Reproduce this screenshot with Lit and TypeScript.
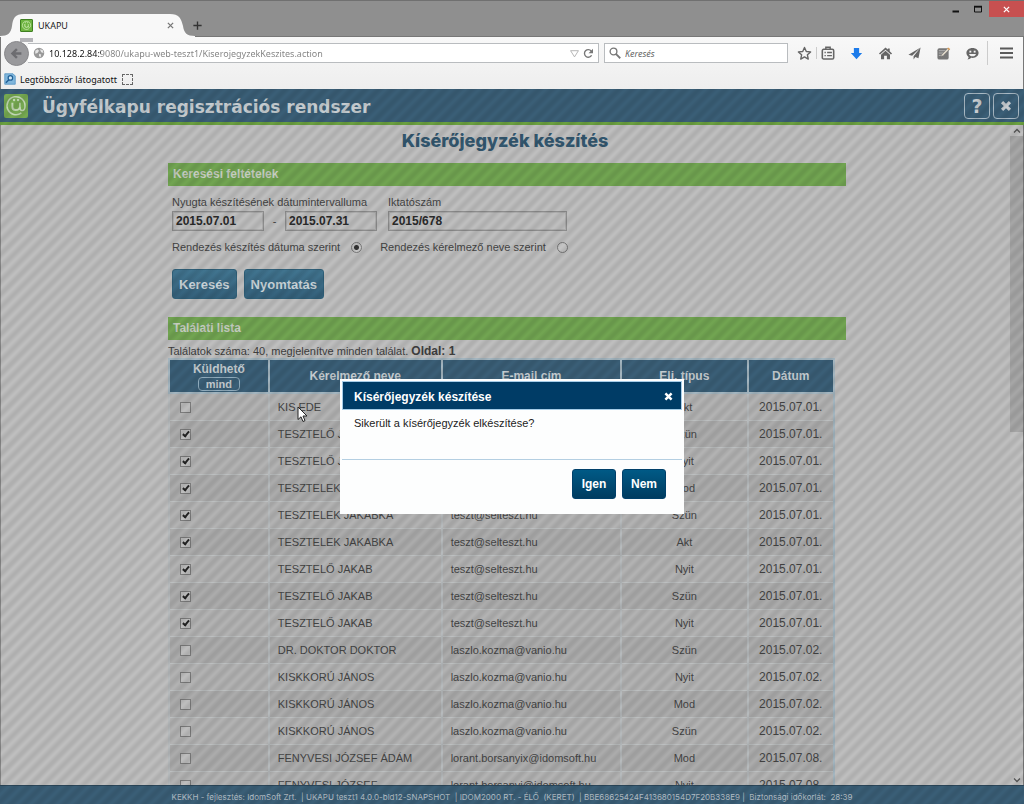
import { LitElement, html, css, svg } from "lit";
import { customElement, state } from "lit/decorators.js";

interface Hit {
  on: boolean;
  name: string;
  mail: string;
  kind: string;
  date: string;
}

const hit = (on: boolean, name: string, mail: string, kind: string, date: string): Hit => ({ on, name, mail, kind, date });

const HITS: Hit[] = [
  hit(false, "KIS EDE", "teszt@selteszt.hu", "Akt", "2015.07.01."),
  hit(true, "TESZTELŐ JAKAB", "teszt@selteszt.hu", "Szün", "2015.07.01."),
  hit(true, "TESZTELŐ JAKAB", "teszt@selteszt.hu", "Nyit", "2015.07.01."),
  hit(true, "TESZTELEK JAKABKA", "teszt@selteszt.hu", "Mod", "2015.07.01."),
  hit(true, "TESZTELEK JAKABKA", "teszt@selteszt.hu", "Szün", "2015.07.01."),
  hit(true, "TESZTELEK JAKABKA", "teszt@selteszt.hu", "Akt", "2015.07.01."),
  hit(true, "TESZTELŐ JAKAB", "teszt@selteszt.hu", "Nyit", "2015.07.01."),
  hit(true, "TESZTELŐ JAKAB", "teszt@selteszt.hu", "Szün", "2015.07.01."),
  hit(true, "TESZTELŐ JAKAB", "teszt@selteszt.hu", "Nyit", "2015.07.01."),
  hit(false, "DR. DOKTOR DOKTOR", "laszlo.kozma@vanio.hu", "Szün", "2015.07.02."),
  hit(false, "KISKKORÚ JÁNOS", "laszlo.kozma@vanio.hu", "Nyit", "2015.07.02."),
  hit(false, "KISKKORÚ JÁNOS", "laszlo.kozma@vanio.hu", "Mod", "2015.07.02."),
  hit(false, "KISKKORÚ JÁNOS", "laszlo.kozma@vanio.hu", "Szün", "2015.07.02."),
  hit(false, "FENYVESI JÓZSEF ÁDÁM", "lorant.borsanyix@idomsoft.hu", "Mod", "2015.07.08."),
  hit(false, "FENYVESI JÓZSEF", "lorant.borsanyi@idomsoft.hu", "Nyit", "2015.07.08."),
];

const icon = (size: number, body: unknown, cls = "") =>
  html`<svg class="ico ${cls}" width=${size} height=${size} viewBox="0 0 16 16" aria-hidden="true">${body}</svg>`;

const atSign = svg`
  <path d="M11.6 12.6a6 6 0 1 1 2.4-4.6c0 2-.8 3-1.9 3s-1.5-.9-1.5-2V5.9" fill="none" stroke="currentColor" stroke-width="1"/>
  <path d="M5.6 5.9v2.8c0 1.3.8 2 2.1 2s2.7-.7 2.9-2" fill="none" stroke="currentColor" stroke-width="1.3"/>
  <circle cx="6.7" cy="4" r=".8" fill="currentColor"/><circle cx="9.4" cy="4" r=".8" fill="currentColor"/>`;

const star = svg`<path d="M8 1.6l1.9 4.2 4.6.5-3.4 3.1.9 4.5L8 11.6l-4 2.3.9-4.5L1.5 6.3l4.6-.5z" fill="none" stroke="#666" stroke-width="1.5" stroke-linejoin="round"/>`;
const clipboard = svg`<rect x="1.500" y="3.800" width="13" height="11" rx="1.500" fill="none" stroke="#666" stroke-width="1.800"/><path d="M5.500 4V1.500h5v2.500M4 7.500h1.500M7 7.500h5.500M4 11h1.500M7 11h5.500" fill="none" stroke="#666" stroke-width="1.600"/>`;
const download = svg`<path d="M5.200 2h5.600v5.500H14L8 14 2 7.500h3.200z" fill="#1c7bea"/>`;
const home = svg`<path d="M8 1.500l2.500 2.300V2.600h2v3L15 8l-1.200 1L8 3.900 2.200 9 1 8z" fill="#666"/><path d="M3.200 9.300L8 5l4.800 4.300V14H9.500v-3.500h-3V14H3.200z" fill="#666"/>`;
const plane = svg`<path d="M14.500 1.500L1.500 9.300l4 1.200zM14.500 1.500L7 11v3.300l1.900-2.500 3.300 1.200z" fill="#666"/>`;
const note = svg`<rect x="1.500" y="2.500" width="12" height="12" rx="2" fill="#777"/><path d="M3 5h8M3 7.500h7M3 10h5" stroke="#b5b5b5"/><path d="M5 11.500l1-2.500 6.500-6.700 1.800 1.400L7.500 10.500z" fill="#e0d8ca" stroke="#666" stroke-width=".5"/><path d="M12 2.800l1-1.300 2.200 1.700-1.100 1.200z" fill="#d79a55"/>`;
const smile = svg`<path d="M8 2c3.900 0 6.500 2.300 6.500 5.300 0 3.100-2.600 5.400-6.500 5.400-.5 0-1 0-1.500-.1-1 1-2.500 1.700-4 1.700.8-.7 1.300-1.700 1.300-2.700C2.300 10.600 1.500 9.100 1.500 7.300 1.500 4.300 4.100 2 8 2z" fill="#666"/><rect x="4.700" y="5" width="2" height="2" fill="#f2f2f2"/><rect x="9.300" y="5" width="2" height="2" fill="#f2f2f2"/><path d="M4.300 8.500h7.400c-.4 1.700-1.800 2.500-3.700 2.500s-3.300-.8-3.700-2.500z" fill="#f2f2f2"/>`;
const burger = svg`<path d="M2 3.500h13M2 8h13M2 12.500h13" stroke="#5a5a5a" stroke-width="2"/>`;
const cross = svg`<path d="M3.500 3.500l9 9M12.500 3.500l-9 9" stroke="currentColor" stroke-width="3.600"/>`;
const thinCross = svg`<path d="M2 2l12 12M14 2L2 14" stroke="currentColor" stroke-width="3"/>`;

@customElement("browser-chrome")
class BrowserChrome extends LitElement {
  static styles = css`
    :host {
      display: block;
      font-family: "Noto Sans", "Open Sans", sans-serif;
      font-size: 9px;
      color: #222;
    }
    button { border: 0; padding: 0; margin: 0; background: none; font: inherit; color: inherit; display: flex; align-items: center; justify-content: center; }
    .ico { display: block; flex: none; }
    .strip {
      height: 36px;
      display: flex;
      align-items: flex-end;
      background: #8f8f8f;
      border-top: 1px solid #707070;
      box-sizing: border-box;
    }
    .tab { position: relative; width: 190px; height: 22px; display: flex; align-items: center; padding: 0 15px 0 20px; box-sizing: border-box; gap: 5px; }
    .shape { position: absolute; left: 0; bottom: -1px; }
    .tab > .fav, .tab > span, .tab > button { position: relative; }
    .fav { width: 13px; height: 13px; background: #6db33f; color: #d9f0c0; border: 1px solid #3f7f22; box-sizing: border-box; border-radius: 1px; }
    .tab span { flex: 1; }
    .tab button { width: 10px; color: #777; }
    .plus { width: 14px; height: 22px; color: #333; }
    .controls { margin-left: auto; align-self: flex-start; display: flex; }
    .controls button { width: 22px; height: 16px; }
    .controls .quit { width: 35px; background: #c75050; color: #fff; }
    .bars { background: linear-gradient(#f8f8f8, #eeeeee); border: 1px solid #777; border-bottom: 0; }
    .nav { position: relative; display: flex; align-items: center; height: 32px; padding: 0 9px 0 27px; }
    .ghost { position: absolute; left: 19px; top: 1px; width: 13px; height: 4px; background: #b4b4b8; }
    .back { position: absolute; left: 3px; top: 4px; width: 25px; height: 25px; border-radius: 50%; background: #99999c; color: #6c6c70; border: 1px solid #88888b; box-sizing: border-box; }
    .url, .find { height: 20px; box-sizing: border-box; background: #fff; border: 1px solid #b9bcbf; display: flex; align-items: center; }
    .url { flex: 1; border-left: 0; padding: 0 4px 0 5px; gap: 4px; margin-right: 5px; }
    .find { width: 184px; padding: 0 4px; gap: 4px; }
    input { border: 0; padding: 0; outline: 0; flex: 1; min-width: 0; background: none; font: inherit; color: #777; }
    .url input {
      background: linear-gradient(90deg, #111 0 52px, #808080 52px);
      -webkit-background-clip: text;
      background-clip: text;
      -webkit-text-fill-color: transparent;
    }
    .find input::placeholder { color: #666; font-style: italic; opacity: 1; }
    .tools { display: flex; align-items: center; margin-left: 9px; gap: 14px; }
    .pair { display: flex; align-items: center; gap: 4px; }
    .sep { width: 1px; height: 12px; background: #ccc; }
    .tall { height: 24px; margin: 0 -4px 0 -7px; }
    .marks { display: flex; align-items: center; height: 20px; padding-left: 3px; gap: 5px; color: #111; }
    .marks a { color: inherit; text-decoration: none; display: flex; align-items: center; gap: 4px; }
    .dash { width: 11px; height: 11px; border: 1px dashed #666; box-sizing: border-box; }
  `;

  render() {
    return html`
      <div class="strip">
        <div class="tab">
          <svg class="shape" width="196" height="23" viewBox="0 0 196 23" aria-hidden="true">
            <path d="M0 23v-1c8 0 11-3 12-10C13 4 15 0 24 0h146c9 0 11 4 13 12 1 7 4 10 12 10v1z" fill="#f8f8f8" />
          </svg>
          <svg class="fav" viewBox="0 0 16 16" aria-hidden="true">${atSign}</svg>
          <span>UKAPU</span>
          <button aria-label="Lap bezárása">${icon(7, thinCross)}</button>
        </div>
        <button class="plus" aria-label="Új lap">${icon(11, svg`<path d="M8 2v12M2 8h12" stroke="currentColor" stroke-width="2"/>`)}</button>
        <div class="controls">
          <button aria-label="Kis méret">${icon(8, svg`<path d="M1 13h13" stroke="#111" stroke-width="4"/>`)}</button>
          <button aria-label="Teljes méret">${icon(8, svg`<path d="M1 4h14v10H1z" fill="none" stroke="#111" stroke-width="2"/><path d="M0 3h16" stroke="#111" stroke-width="3"/>`)}</button>
          <button class="quit" aria-label="Bezárás">${icon(7, thinCross)}</button>
        </div>
      </div>
      <div class="bars">
        <div class="nav">
          <div class="url">
            ${icon(12, svg`<circle cx="8" cy="8" r="7" fill="#999"/><path d="M3 5l3-2 2 2-2 3-3 1zM9 3l4 1 1 4-3-1zM8 9l3 1-1 4-2-2z" fill="#e6e6e6"/>`)}
            <input aria-label="Cím" value="10.128.2.84:9080/ukapu-web-teszt1/KiserojegyzekKeszites.action" />
            ${icon(9, svg`<path d="M1 3h14L8 14z" fill="none" stroke="#aaa" stroke-width="1.500"/>`)}
            ${icon(11, svg`<path d="M12.500 10.500A5.500 5.500 0 1 1 12 4.500" fill="none" stroke="#777" stroke-width="2"/><path d="M14.500 1v6.500H8z" fill="#777"/>`)}
          </div>
          <div class="find">
            ${icon(12, svg`<circle cx="6" cy="6" r="4.500" fill="none" stroke="#777" stroke-width="1.800"/><path d="M9.500 9.500l5.500 5.500" stroke="#777" stroke-width="2.400"/>`)}
            <input aria-label="Keresés a weben" placeholder="Keresés" />
          </div>
          <div class="tools">
            <div class="pair">
              <button aria-label="Könyvjelző">${icon(15, star)}</button>
              <span class="sep"></span>
              <button aria-label="Könyvjelzők">${icon(14, clipboard)}</button>
            </div>
            <button aria-label="Letöltések">${icon(15, download)}</button>
            <button aria-label="Kezdőlap">${icon(15, home)}</button>
            <button aria-label="Megosztás">${icon(15, plane)}</button>
            <button aria-label="Jegyzet">${icon(15, note)}</button>
            <button aria-label="Csevegés">${icon(15, smile)}</button>
            <span class="sep tall"></span>
            <button aria-label="Menü">${icon(16, burger)}</button>
          </div>
          <span class="ghost"></span>
          <button class="back" aria-label="Vissza">${icon(13, svg`<path d="M14 8H4M8.500 2.500L3 8l5.500 5.500" fill="none" stroke="currentColor" stroke-width="3"/>`)}</button>
        </div>
        <div class="marks">
          <a href="#">
            ${icon(12, svg`<path d="M1 1h11l3 3v11H1z" fill="#7fb6dc" stroke="#4d8fc0"/><circle cx="8.500" cy="6.500" r="3" fill="#cfe6f5" stroke="#1f5f96" stroke-width="1.600"/><path d="M6.500 9l-4 4" stroke="#1f5f96" stroke-width="2"/>`)}
            Legtöbbször látogatott
          </a>
          <span class="dash"></span>
        </div>
      </div>
    `;
  }
}

@customElement("confirm-dialog")
class ConfirmDialog extends LitElement {
  static styles = css`
    :host {
      display: block;
      width: 344px;
      box-sizing: border-box;
      padding: 2px;
      background: #fdfefe;
      font-family: "Liberation Sans", Arial, sans-serif;
      font-size: 11px;
      color: #222;
    }
    .bar {
      display: flex;
      align-items: center;
      justify-content: space-between;
      height: 25px;
      padding: 2px 7px 0 11px;
      background: #003c66;
      border: 1px solid #a6cde8;
      color: #fff;
      font-size: 12px;
      font-weight: bold;
    }
    .bar button { border: 0; background: none; padding: 0; color: #fff; display: flex; }
    .text { margin: 0; padding: 5px 12px 28px; line-height: 16px; border-bottom: 1px solid #b4cfe2; }
    .actions { display: flex; justify-content: flex-end; gap: 6px; padding: 9px 16px 13px; }
    .act {
      width: 44px;
      height: 30px;
      border: 1px solid #00406a;
      border-radius: 3px;
      background: linear-gradient(#005a86, #003c60);
      color: #fff;
      font: bold 12px "Liberation Sans", Arial, sans-serif;
      padding: 0;
    }
  `;

  render() {
    return html`
      <div class="bar">
        <span>Kísérőjegyzék készítése</span>
        <button aria-label="Bezárás">${icon(11, cross)}</button>
      </div>
      <p class="text">Sikerült a kísérőjegyzék elkészítése?</p>
      <div class="actions">
        <button class="act">Igen</button>
        <button class="act">Nem</button>
      </div>
    `;
  }
}

@customElement("app-root")
class AppRoot extends LitElement {
  @state() private hits = HITS;

  static styles = css`
    :host {
      display: flex;
      flex-direction: column;
      height: 100vh;
      overflow: hidden;
      font-family: "Liberation Sans", Arial, sans-serif;
      font-size: 11px;
      color: #444;
    }
    .app {
      position: relative;
      flex: 1;
      min-height: 0;
      display: flex;
      flex-direction: column;
      background: #bebebe;
    }
    .head {
      flex: none;
      display: flex;
      align-items: center;
      height: 33px;
      padding: 0 5px 0 4px;
      background: #3a5e76;
      border-bottom: 3px solid #6aa03f;
    }
    .logo { width: 24px; height: 24px; background: #76a951; color: #c3d8b6; border-radius: 2px; }
    .head h1 { flex: 1; margin: 0 0 0 14px; padding-top: 3px; font: bold 17px "DejaVu Sans", Verdana, sans-serif; color: #c6cdd1; }
    .sq {
      width: 26px;
      height: 26px;
      margin-left: 3px;
      display: flex;
      align-items: center;
      justify-content: center;
      box-sizing: border-box;
      padding: 0;
      border: 1px solid #a9bac5;
      border-radius: 4px;
      background: none;
      color: #c8cdd1;
      font: bold 19px "DejaVu Sans", sans-serif;
    }
    .body { flex: 1; min-height: 0; display: flex; box-shadow: inset 1px 0 #888; }
    .page { flex: 1; min-width: 0; overflow: hidden; }
    .rail { width: 13px; display: flex; flex-direction: column; align-items: center; background: #c0c0c0; border-right: 1px solid #777; }
    .rail .cap { height: 11px; display: flex; align-items: center; color: #555; }
    .thumb { width: 100%; height: 296px; background: #a6a6a6; }
    .rail .cap:last-child { margin-top: auto; }
    .wrap { max-width: 682px; box-sizing: border-box; padding-left: 4px; margin: 0 auto; }
    h2 { margin: 0; height: 38px; text-align: center; font: 800 18px/32px Inter, "Liberation Sans", sans-serif; color: #33576f; }
    h3 { margin: 0; padding: 0 5px; font-size: 12px; line-height: 23px; color: #c6cdc1; background: #71a451; }
    form { padding: 8px 4px 0; }
    .fields { display: flex; gap: 11px; }
    .fields fieldset, .field { margin: 0; padding: 0; border: 0; }
    .fields legend, .field label { display: block; padding: 0; line-height: 17px; white-space: nowrap; }
    .dates { display: flex; align-items: center; justify-content: space-between; }
    .txt {
      width: 92px;
      height: 20px;
      box-sizing: border-box;
      padding: 0 3px;
      border: 1px solid #8d8d8d;
      box-shadow: inset 0 0 0 1px #acacac;
      background: none;
      color: #2a2a2a;
      font: bold 12px "Liberation Sans", Arial, sans-serif;
    }
    .pairbox { width: 205px; }
    .wide { width: 179px; }
    .sorts { display: flex; gap: 18px; padding: 8px 0; line-height: 16px; }
    .sorts label { display: flex; align-items: center; gap: 11px; }
    .dot { appearance: none; width: 11px; height: 11px; margin: 0; border: 1px solid #777; border-radius: 50%; background: #c4c4c4; box-sizing: border-box; }
    .dot:checked { background: radial-gradient(circle, #333 0 2px, #c4c4c4 3px); }
    .acts { display: flex; gap: 7px; padding: 6px 0 18px; }
    .btn {
      height: 30px;
      padding: 0 6px;
      border: 1px solid #2f6079;
      border-radius: 3px;
      background: linear-gradient(#41748f, #34607a);
      color: #c9d3d8;
      font: bold 13px "Liberation Sans", Arial, sans-serif;
    }
    .count { margin: 0; line-height: 14px; padding-top: 4px; color: #3f3f3f; }
    .count b { font-size: 12px; }
    table { width: calc(100% - 11px); border-collapse: collapse; table-layout: fixed; border: 2px solid #a3b5bf; }
    th { height: 32px; padding: 0; background: #3a5e76; border: 2px solid #a3b5bf; color: #c5ccd0; font-size: 12px; line-height: 14px; }
    .all { display: block; margin: 1px auto 0; padding: 0 7px; height: 14px; border: 1px solid #8fabbc; border-radius: 4px; background: none; color: #c5ccd0; font: bold 11px/12px "Liberation Sans", sans-serif; }
    td { height: 26px; padding: 0 8px; border-bottom: 1px solid #bcbfc0; border-left: 2px solid #b6babc; white-space: nowrap; }
    tr:nth-child(odd) td { background: #b2b2b2; }
    tr:nth-child(even) td { background: #ababab; }
    .mid { text-align: center; }
    .day { text-align: center; font-size: 12px; }
    .c1 { width: 15%; }
    .c2 { width: 26%; }
    .c3 { width: 27%; }
    .c4 { width: 19%; }
    .tick { appearance: none; display: block; width: 11px; height: 11px; margin: 0 0 0 2px; border: 1px solid #7b7b7b; background: #bdbdbd; position: relative; box-sizing: border-box; }
    .tick:checked::after { content: ""; position: absolute; left: 3px; top: 0; width: 2px; height: 5px; border: solid #222; border-width: 0 2px 2px 0; transform: rotate(40deg); }
    .foot {
      flex: none;
      height: 19px;
      box-sizing: border-box;
      padding-top: 4px;
      border-top: 1px solid #2a4659;
      background: #3a5e76;
      color: #b4bfc6;
      text-align: center;
      white-space: pre;
      font: 8px/14px Inter, "Liberation Sans", sans-serif;
    }
    .veil {
      position: absolute;
      inset: 0;
      display: flex;
      align-items: center;
      justify-content: center;
      background: repeating-linear-gradient(135deg, rgba(0, 0, 0, 0) 0, rgba(0, 0, 0, 0.080) 6%, rgba(0, 0, 0, 0.080) 9%, rgba(0, 0, 0, 0) 15%, rgba(0, 0, 0, 0) 16.6667%);
      background-size: 40px 40px;
    }
    .pointer { position: absolute; left: 297px; top: 317px; }
  `;

  private toggle(i: number) {
    this.hits = this.hits.map((h, n) => (n === i ? { ...h, on: !h.on } : h));
  }

  render() {
    return html`
      <browser-chrome></browser-chrome>
      <div class="app">
        <header class="head">
          <svg class="logo" viewBox="0 0 16 16" aria-hidden="true">${atSign}</svg>
          <h1>Ügyfélkapu regisztrációs rendszer</h1>
          <button class="sq">?</button>
          <button class="sq" aria-label="Kilépés">${icon(14, cross)}</button>
        </header>
        <div class="body">
          <main class="page">
            <h2>Kísérőjegyzék készítés</h2>
            <div class="wrap">
              <h3>Keresési feltételek</h3>
              <form>
                <div class="fields">
                  <fieldset class="pairbox">
                    <legend>Nyugta készítésének dátumintervalluma</legend>
                    <div class="dates">
                      <input class="txt" aria-label="Kezdő dátum" value="2015.07.01" />
                      <span>-</span>
                      <input class="txt" aria-label="Záró dátum" value="2015.07.31" />
                    </div>
                  </fieldset>
                  <div class="field">
                    <label for="ikt">Iktatószám</label>
                    <input class="txt wide" id="ikt" value="2015/678" />
                  </div>
                </div>
                <div class="sorts">
                  <label>Rendezés készítés dátuma szerint <input class="dot" type="radio" name="sort" checked /></label>
                  <label>Rendezés kérelmező neve szerint <input class="dot" type="radio" name="sort" /></label>
                </div>
                <div class="acts">
                  <button class="btn" type="button">Keresés</button>
                  <button class="btn" type="button">Nyomtatás</button>
                </div>
              </form>
              <h3>Találati lista</h3>
              <p class="count">Találatok száma: 40, megjelenítve minden találat. <b>Oldal: 1</b></p>
              <table>
                <colgroup><col class="c1" /><col class="c2" /><col class="c3" /><col class="c4" /><col /></colgroup>
                <thead>
                  <tr>
                    <th>Küldhető <button class="all">mind</button></th>
                    <th>Kérelmező neve</th>
                    <th>E-mail cím</th>
                    <th>Elj. típus</th>
                    <th>Dátum</th>
                  </tr>
                </thead>
                <tbody>
                  ${this.hits.map(
                    (h, i) => html`<tr>
                      <td><input class="tick" type="checkbox" aria-label="Küldhető: ${h.name}" .checked=${h.on} @change=${() => this.toggle(i)} /></td>
                      <td>${h.name}</td>
                      <td>${h.mail}</td>
                      <td class="mid">${h.kind}</td>
                      <td class="day">${h.date}</td>
                    </tr>`,
                  )}
                </tbody>
              </table>
            </div>
          </main>
          <div class="rail">
            <span class="cap">${icon(8, svg`<path d="M2 11l6-6 6 6" fill="none" stroke="currentColor" stroke-width="2.500"/>`)}</span>
            <span class="thumb"></span>
            <span class="cap">${icon(8, svg`<path d="M2 5l6 6 6-6" fill="none" stroke="currentColor" stroke-width="2.500"/>`)}</span>
          </div>
        </div>
        <footer class="foot">KEKKH - fejlesztés: IdomSoft Zrt.  | UKAPU teszt1 4.0.0-bld12-SNAPSHOT  | IDOM2000 RT. - ÉLŐ  (KERET)  | BBE68625424F413680154D7F20B338E9 |  Biztonsági időkorlát:  28:39</footer>
        <div class="veil">
          <confirm-dialog role="dialog"></confirm-dialog>
          <svg class="pointer" width="11" height="17" viewBox="0 0 11 17" aria-hidden="true">
            <path d="M1 1v12.500l3-2.700 2 4.700 2-.9-2-4.600h4z" fill="#fff" stroke="#222" />
          </svg>
        </div>
      </div>
    `;
  }
}
